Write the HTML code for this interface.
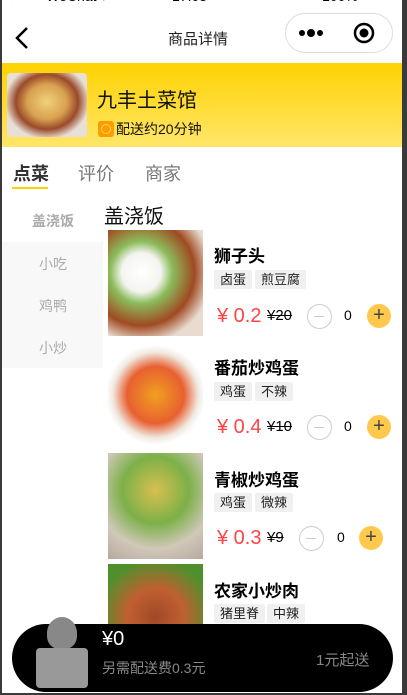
<!DOCTYPE html><html><head><meta charset="utf-8"><style>
*{margin:0;padding:0;box-sizing:border-box}
body{width:407px;height:695px;overflow:hidden;background:#3a3a3a;font-family:"Liberation Sans","Noto Sans CJK SC",sans-serif;position:relative}
.page{position:absolute;left:2px;top:0;width:400px;height:693px;background:#fff;overflow:hidden}
.a{position:absolute;white-space:nowrap}
.tag{position:absolute;background:#f0f0f0;font-size:13px;height:19px;line-height:19px;padding:0 6px;border-radius:2px;color:#222}
.img{position:absolute;left:106px;width:95px;height:106px}
.minus{position:absolute;width:25px;height:25px;border:1.5px solid #ccc;border-radius:50%}
.minus:after{content:"";position:absolute;left:6px;top:10.5px;width:10px;height:1.5px;background:#ccc}
.plus{position:absolute;width:24px;height:24px;background:#ffc94d;border-radius:50%;color:#444;text-align:center;line-height:23px;font-size:20px}
.pr{position:absolute;font-size:20px;color:#f44;font-weight:300}
</style></head><body><div class="page">
<div class="a" style="left:-2px;top:-12px;font-size:14px;color:#000">●●●●● WeChat ▾</div>
<div class="a" style="left:170px;top:-12px;font-size:14px">17:03</div>
<div class="a" style="left:320px;top:-12px;font-size:14px">100% ▭</div>
<svg class="a" style="left:12px;top:26px" width="16" height="24"><path d="M13 2 L3 12 L13 22" fill="none" stroke="#000" stroke-width="2.5"/></svg>
<div class="a" style="left:166px;top:28px;font-size:15px;color:#222">商品详情</div>
<div class="a" style="left:283px;top:13px;width:108px;height:40px;border:1px solid #ddd;border-radius:20px;background:#fff"></div>
<svg class="a" style="left:296px;top:28px" width="30" height="10"><circle cx="4" cy="5" r="3" fill="#000"/><circle cx="13" cy="5" r="4" fill="#000"/><circle cx="22" cy="5" r="3" fill="#000"/></svg>
<svg class="a" style="left:351px;top:22px" width="22" height="22"><circle cx="11" cy="11" r="9" fill="none" stroke="#000" stroke-width="2.5"/><circle cx="11" cy="11" r="4.5" fill="#000"/></svg>
<div class="a" style="left:0;top:63px;width:400px;height:84px;background:linear-gradient(#ffd200,#ffe66a)"></div>
<div class="a" style="left:5px;top:73px;width:80px;height:64px;border-radius:4px;background:radial-gradient(ellipse at 50% 45%,#f0d27a 0,#d8a050 35%,#9a4a2a 55%,#e8e0d8 75%)"></div>
<div class="a" style="left:95px;top:84px;font-size:20px;color:#111">九丰土菜馆</div>
<div class="a" style="left:96px;top:121px;width:16px;height:16px;background:#ff9d00;border-radius:3px"></div>
<div class="a" style="left:99px;top:124px;width:10px;height:10px;border:1.5px solid #ffd060;border-radius:50%"></div>
<div class="a" style="left:114px;top:119px;font-size:14px;color:#111">配送约20分钟</div>
<div class="a" style="left:11px;top:160px;font-size:18px;font-weight:bold;color:#333">点菜</div>
<div class="a" style="left:10px;top:187px;width:36px;height:2px;background:#ffd200"></div>
<div class="a" style="left:76px;top:160px;font-size:18px;color:#777">评价</div>
<div class="a" style="left:143px;top:160px;font-size:18px;color:#777">商家</div>
<div class="a" style="left:0;top:242px;width:101px;height:126px;background:#f8f8f8"></div>
<div class="a" style="left:30px;top:211px;font-size:14px;color:#aaa;font-weight:bold">盖浇饭</div>
<div class="a" style="left:37px;top:254px;font-size:14px;color:#aaa">小吃</div>
<div class="a" style="left:37px;top:296px;font-size:14px;color:#aaa">鸡鸭</div>
<div class="a" style="left:37px;top:338px;font-size:14px;color:#aaa">小炒</div>
<div class="a" style="left:102px;top:200px;font-size:20px;color:#111">盖浇饭</div>

<div class="img" style="top:230px;background:radial-gradient(circle at 35% 40%,#fff 0,#f4f4f0 22%,#8cbc5c 35%,#a04a22 60%,#e8dcd0 80%)"></div>
<div class="a" style="left:212px;top:242px;font-size:17px;font-weight:bold">狮子头</div>
<div class="tag" style="left:212px;top:270px">卤蛋</div><div class="tag" style="left:253px;top:270px">煎豆腐</div>
<div class="pr" style="left:215px;top:305px">¥ 0.2</div>
<div class="a" style="left:265px;top:307px;font-size:15px;text-decoration:line-through">¥20</div>
<div class="minus" style="left:305px;top:304px"></div><div class="a" style="left:342px;top:307px;font-size:14px">0</div><div class="plus" style="left:365px;top:304px">+</div>

<div class="img" style="top:342px;background:radial-gradient(circle,#f0a020 0,#e86030 40%,#f0e8e0 60%,#fff 70%)"></div>
<div class="a" style="left:212px;top:354px;font-size:17px;font-weight:bold">番茄炒鸡蛋</div>
<div class="tag" style="left:212px;top:382px">鸡蛋</div><div class="tag" style="left:253px;top:382px">不辣</div>
<div class="pr" style="left:215px;top:416px">¥ 0.4</div>
<div class="a" style="left:265px;top:418px;font-size:15px;text-decoration:line-through">¥10</div>
<div class="minus" style="left:305px;top:415px"></div><div class="a" style="left:342px;top:418px;font-size:14px">0</div><div class="plus" style="left:365px;top:415px">+</div>

<div class="img" style="top:453px;background:radial-gradient(circle at 50% 35%,#d8c050 0,#7cb048 40%,#d0c8b8 70%,#b8a8a0 100%)"></div>
<div class="a" style="left:212px;top:466px;font-size:17px;font-weight:bold">青椒炒鸡蛋</div>
<div class="tag" style="left:212px;top:493px">鸡蛋</div><div class="tag" style="left:253px;top:493px">微辣</div>
<div class="pr" style="left:215px;top:527px">¥ 0.3</div>
<div class="a" style="left:265px;top:529px;font-size:15px;text-decoration:line-through">¥9</div>
<div class="minus" style="left:297px;top:526px"></div><div class="a" style="left:335px;top:529px;font-size:14px">0</div><div class="plus" style="left:357px;top:526px">+</div>

<div class="img" style="top:564px;background:radial-gradient(circle,#a04828 0,#c06030 40%,#50902c 80%)"></div>
<div class="a" style="left:212px;top:577px;font-size:17px;font-weight:bold">农家小炒肉</div>
<div class="tag" style="left:212px;top:604px">猪里脊</div><div class="tag" style="left:265px;top:604px">中辣</div>

<div class="a" style="left:10px;top:624px;width:381px;height:68px;background:#000;border-radius:34px"></div>
<div class="a" style="left:45px;top:617px;width:30px;height:32px;background:#888;border-radius:50% 50% 40% 40%"></div>
<div class="a" style="left:34px;top:648px;width:52px;height:40px;background:#999;border-radius:4px"></div>
<div class="a" style="left:100px;top:628px;font-size:20px;color:#fff">¥0</div>
<div class="a" style="left:100px;top:658px;font-size:14px;color:#888">另需配送费0.3元</div>
<div class="a" style="left:314px;top:649px;font-size:15px;color:#888">1元起送</div>
</div></body></html>
